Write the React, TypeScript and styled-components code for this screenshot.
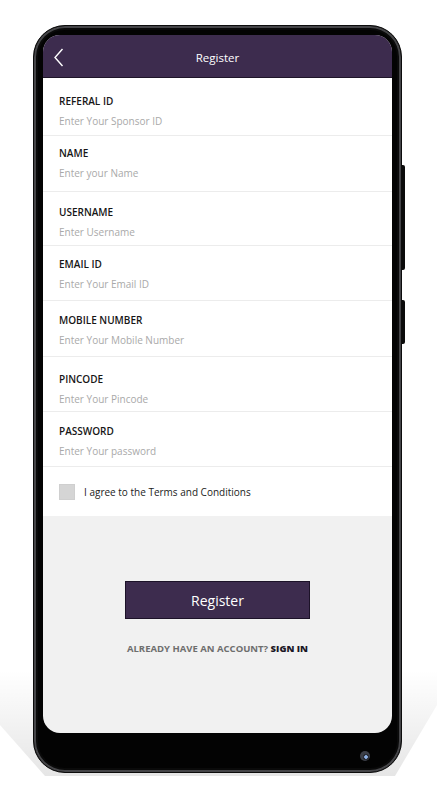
import React from "react";
import styled, { createGlobalStyle } from "styled-components";

const Global = createGlobalStyle`
  html, body { margin: 0; padding: 0; background: #ffffff; }
  body { font-family: "Open Sans", "Noto Sans", sans-serif; }
  * { box-sizing: border-box; }
`;

const Stage = styled.div`
  position: relative;
  width: 437px;
  height: 800px;
  padding: 25px 0 0 33px;
  overflow: hidden;
`;

const Shadow = styled.svg`
  position: absolute;
  left: 0;
  top: 0;
  width: 437px;
  height: 800px;
`;

const Phone = styled.div`
  position: relative;
  width: 369px;
  height: 748px;
  border-radius: 32px;
  background: #030303;
  border: 1px solid #0c0c0c;
  box-shadow: inset 0 0 0 2px #454548, inset 0 0 0 4px #0a0a0a;
  padding: 9px 9px 39px 9px;
`;

const SideButton = styled.div<{ $top: number; $h: number }>`
  position: absolute;
  right: -4px;
  top: ${(p) => p.$top}px;
  width: 3px;
  height: ${(p) => p.$h}px;
  background: #0b0b0b;
  border-radius: 0 2px 2px 0;
`;

const Camera = styled.div`
  position: absolute;
  left: 326px;
  top: 725px;
  width: 10px;
  height: 10px;
  border-radius: 50%;
  background: radial-gradient(circle at 60% 60%, #8fb2e8 0 1.5px, #2a2d36 2px 3px, #3c3f48 3.5px);
`;

const Screen = styled.div`
  width: 100%;
  height: 100%;
  border-radius: 17px;
  overflow: hidden;
  background: #f1f1f1;
  display: flex;
  flex-direction: column;
`;

const Header = styled.div`
  height: 43px;
  flex: none;
  background: #3d2c4e;
  border-bottom: 1px solid #1e1528;
  display: flex;
  align-items: center;
  justify-content: center;
  padding-top: 2px;
  position: relative;
  color: #ffffff;
  font-family: "Open Sans", sans-serif;
  font-size: 11.5px;
`;

const Back = styled.svg`
  position: absolute;
  left: 11px;
  top: 13px;
`;

const Form = styled.div`
  background: #ffffff;
  display: flex;
  flex-direction: column;
`;

const Field = styled.div<{ $pt: number; $pb: number }>`
  padding: ${(p) => p.$pt}px 16px ${(p) => p.$pb}px 16px;
  border-bottom: 1px solid #ececec;
  display: flex;
  flex-direction: column;
  gap: 6px;
`;

const Label = styled.div`
  font-size: 10px;
  line-height: 14px;
  font-weight: 600;
  color: #161616;
`;

const Placeholder = styled.div`
  font-size: 10px;
  line-height: 14px;
  color: #a9a9a9;
`;

const Agree = styled.label`
  height: 49px;
  display: flex;
  align-items: center;
  gap: 9px;
  padding: 0 16px 0 16px;
  font-size: 10px;
  color: #222222;
`;

const Box = styled.span`
  width: 16px;
  height: 16px;
  background: #d5d5d5;
  border: 1px solid #cfcfcf;
  flex: none;
`;

const Bottom = styled.div`
  flex: 1;
  display: flex;
  flex-direction: column;
  align-items: center;
  padding-top: 65px;
`;

const Button = styled.button`
  width: 185px;
  height: 38px;
  background: #3d2c4e;
  border: 1px solid #1c1228;
  color: #ffffff;
  font-family: "Open Sans", sans-serif;
  font-size: 14px;
  cursor: pointer;
`;

const SignIn = styled.div`
  margin-top: 23px;
  font-size: 9.5px;
  font-weight: 700;
  color: #6e6e6e;
  b { color: #1b1726; }
`;

const fields = [
  { label: "REFERAL ID", ph: "Enter Your Sponsor ID", pt: 16, pb: 7 },
  { label: "NAME", ph: "Enter your Name", pt: 10, pb: 11 },
  { label: "USERNAME", ph: "Enter Username", pt: 13, pb: 6 },
  { label: "EMAIL ID", ph: "Enter Your Email ID", pt: 11, pb: 9 },
  { label: "MOBILE NUMBER", ph: "Enter Your Mobile Number", pt: 12, pb: 9 },
  { label: "PINCODE", ph: "Enter Your Pincode", pt: 15, pb: 5 },
  { label: "PASSWORD", ph: "Enter Your password", pt: 12, pb: 8 },
];

export default function App() {
  return (
    <>
      <Global />
      <Stage>
        <Shadow viewBox="0 0 437 800">
          <defs>
            <linearGradient id="sh" x1="0" y1="0" x2="0" y2="1">
              <stop offset="0" stopColor="#000" stopOpacity="0" />
              <stop offset="1" stopColor="#000" stopOpacity="0.1" />
            </linearGradient>
          </defs>
          <polygon points="0,670 437,670 437,705 395,776 45,776 0,725" fill="url(#sh)" />
        </Shadow>
        <Phone>
          <SideButton $top={139} $h={105} />
          <SideButton $top={274} $h={44} />
          <Screen>
            <Header>
              <Back width="10" height="19" viewBox="0 0 10 19">
                <polyline points="8.5,1 1,9.5 8.5,18" fill="none" stroke="#fff" strokeWidth="1.4" />
              </Back>
              Register
            </Header>
            <Form>
              {fields.map((f) => (
                <Field key={f.label} $pt={f.pt} $pb={f.pb}>
                  <Label>{f.label}</Label>
                  <Placeholder>{f.ph}</Placeholder>
                </Field>
              ))}
              <Agree>
                <Box />
                I agree to the Terms and Conditions
              </Agree>
            </Form>
            <Bottom>
              <Button>Register</Button>
              <SignIn>
                ALREADY HAVE AN ACCOUNT? <b>SIGN IN</b>
              </SignIn>
            </Bottom>
          </Screen>
          <Camera />
        </Phone>
      </Stage>
    </>
  );
}
